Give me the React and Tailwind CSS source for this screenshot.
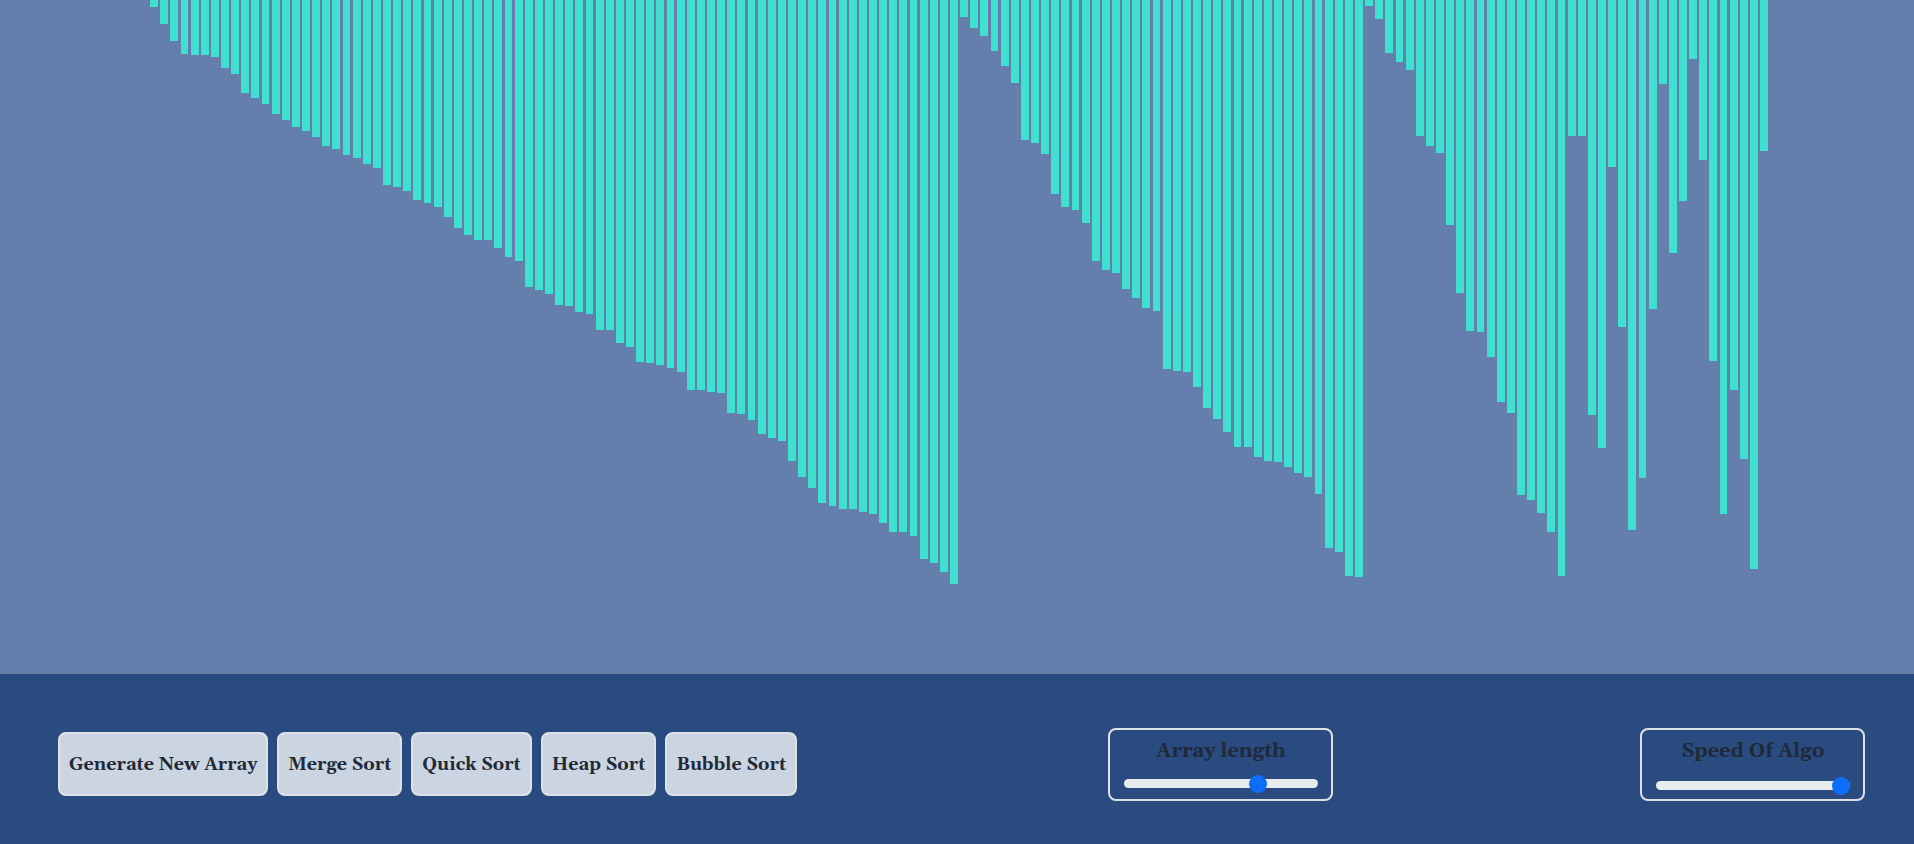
import { useState } from "react";

const SEGMENT_A = [
  7, 24, 41, 54, 55, 55, 57, 68, 74, 93, 98, 104, 114, 120, 127, 131, 137, 146, 149, 155,
  158, 164, 168, 185, 187, 191, 200, 203, 207, 217, 228, 235, 240, 240, 248, 257, 261, 287, 290, 294,
  305, 306, 312, 314, 330, 330, 343, 347, 362, 363, 365, 368, 372, 390, 390, 392, 393, 413, 414, 420,
  434, 438, 441, 461, 477, 488, 503, 506, 509, 509, 512, 514, 523, 532, 532, 536, 559, 563, 572, 584,
];

const SEGMENT_B = [
  17, 28, 36, 51, 66, 83, 140, 143, 154, 194, 207, 210, 223, 261, 270, 273, 289, 298, 308, 311,
  369, 371, 372, 387, 408, 419, 432, 447, 447, 457, 461, 462, 467, 473, 477, 494, 548, 552, 576, 577,
];

const SEGMENT_C = [
  6, 19, 53, 62, 70, 136, 146, 153, 225, 293, 331, 332, 357, 402, 413, 495, 500, 513, 532, 576,
];

const UNSORTED = [
  136, 136, 415, 448, 167, 327, 530, 478, 309, 84, 253, 201, 59, 160, 361, 514, 390, 459, 569, 151,
];

const VALUES = [...SEGMENT_A, ...SEGMENT_B, ...SEGMENT_C, ...UNSORTED];

const ACTIONS = ["Generate New Array", "Merge Sort", "Quick Sort", "Heap Sort", "Bubble Sort"];

function Bars({ values }) {
  return (
    <main className="flex flex-1 items-start overflow-hidden pr-[145px] pl-[149px]">
      {values.map((value, index) => (
        <div key={index} className="flex min-w-0 flex-1 justify-center">
          <div className="w-7/9 bg-[#40e0d0]" style={{ height: value }} />
        </div>
      ))}
    </main>
  );
}

function RangeField({ id, label, max, initial, spacing }) {
  const [value, setValue] = useState(initial);
  return (
    <div
      className={`flex w-[225px] flex-col rounded-lg border-2 border-[#dee2e6] pt-[7px] pr-[13px] pl-[14px] ${spacing}`}
    >
      <label htmlFor={id} className="text-center text-xl leading-7">
        {label}
      </label>
      <input
        id={id}
        type="range"
        min={0}
        max={max}
        value={value}
        onChange={(event) => setValue(Number(event.target.value))}
        className="h-[18px] w-full cursor-pointer appearance-none bg-transparent [&::-webkit-slider-runnable-track]:h-[9px] [&::-webkit-slider-runnable-track]:rounded-full [&::-webkit-slider-runnable-track]:bg-[#e9ecef] [&::-webkit-slider-thumb]:-mt-1 [&::-webkit-slider-thumb]:size-[18px] [&::-webkit-slider-thumb]:appearance-none [&::-webkit-slider-thumb]:rounded-full [&::-webkit-slider-thumb]:bg-[#0d6efd]"
      />
    </div>
  );
}

export default function App() {
  return (
    <div className="flex min-h-screen flex-col bg-[#647fac] font-['Gelasio','Georgia','Liberation_Serif',serif] font-bold text-[#1f2937]">
      <Bars values={VALUES} />
      <footer className="flex items-start justify-between bg-[#294b80] pt-[54px] pr-[49px] pb-[43px] pl-[58px]">
        <div className="mt-1 mr-1 flex gap-[9px]">
          {ACTIONS.map((action) => (
            <button
              key={action}
              type="button"
              className="h-16 cursor-pointer rounded-lg border-2 border-[#dee2e6] bg-[#cbd5e1] px-[9px] pt-0.5 text-lg whitespace-nowrap"
            >
              {action}
            </button>
          ))}
        </div>
        <RangeField
          id="array-length"
          label="Array length"
          max={225}
          initial={160}
          spacing="gap-[9px] pb-[7px]"
        />
        <RangeField
          id="algo-speed"
          label="Speed Of Algo"
          max={100}
          initial={100}
          spacing="gap-[11px] pb-[5px]"
        />
      </footer>
    </div>
  );
}
